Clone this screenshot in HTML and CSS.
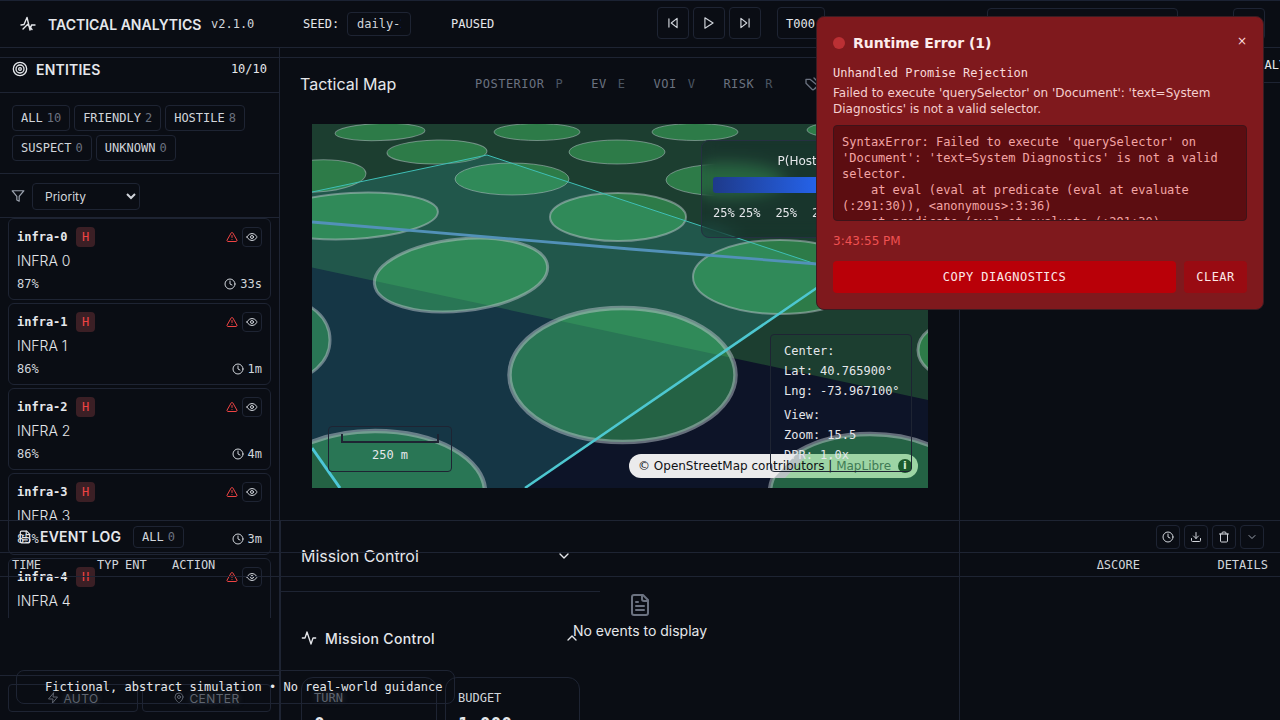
FILE: index.html
```html
<!DOCTYPE html>
<html lang="en">
<head>
<meta charset="utf-8">
<title>Tactical Analytics</title>
<link rel="stylesheet" href="styles.css">
</head>
<body>
<svg class="defs" aria-hidden="true">
  <symbol id="i-activity" viewBox="0 0 24 24"><path d="M22 12h-4l-3 9L9 3l-3 9H2"/></symbol>
  <symbol id="i-target" viewBox="0 0 24 24"><circle cx="12" cy="12" r="10"/><circle cx="12" cy="12" r="6"/><circle cx="12" cy="12" r="2"/></symbol>
  <symbol id="i-filter" viewBox="0 0 24 24"><polygon points="22 3 2 3 10 12.46 10 19 14 21 14 12.46 22 3"/></symbol>
  <symbol id="i-alert" viewBox="0 0 24 24"><path d="m21.73 18-8-14a2 2 0 0 0-3.48 0l-8 14A2 2 0 0 0 4 21h16a2 2 0 0 0 1.73-3"/><path d="M12 9v4"/><path d="M12 17h.01"/></symbol>
  <symbol id="i-eye" viewBox="0 0 24 24"><path d="M2 12s3-7 10-7 10 7 10 7-3 7-10 7-10-7-10-7Z"/><circle cx="12" cy="12" r="3"/></symbol>
  <symbol id="i-clock" viewBox="0 0 24 24"><circle cx="12" cy="12" r="10"/><polyline points="12 6 12 12 16 14"/></symbol>
  <symbol id="i-back" viewBox="0 0 24 24"><polygon points="19 20 9 12 19 4 19 20"/><line x1="5" y1="19" x2="5" y2="5"/></symbol>
  <symbol id="i-play" viewBox="0 0 24 24"><polygon points="5 3 19 12 5 21 5 3"/></symbol>
  <symbol id="i-forward" viewBox="0 0 24 24"><polygon points="5 4 15 12 5 20 5 4"/><line x1="19" y1="5" x2="19" y2="19"/></symbol>
  <symbol id="i-down" viewBox="0 0 24 24"><path d="m6 9 6 6 6-6"/></symbol>
  <symbol id="i-up" viewBox="0 0 24 24"><path d="m18 15-6-6-6 6"/></symbol>
  <symbol id="i-file" viewBox="0 0 24 24"><path d="M15 2H6a2 2 0 0 0-2 2v16a2 2 0 0 0 2 2h12a2 2 0 0 0 2-2V7Z"/><path d="M14 2v4a2 2 0 0 0 2 2h4"/><path d="M10 9H8"/><path d="M16 13H8"/><path d="M16 17H8"/></symbol>
  <symbol id="i-download" viewBox="0 0 24 24"><path d="M21 15v4a2 2 0 0 1-2 2H5a2 2 0 0 1-2-2v-4"/><polyline points="7 10 12 15 17 10"/><line x1="12" y1="15" x2="12" y2="3"/></symbol>
  <symbol id="i-trash" viewBox="0 0 24 24"><path d="M3 6h18"/><path d="M19 6v14a2 2 0 0 1-2 2H7a2 2 0 0 1-2-2V6"/><path d="M8 6V4a2 2 0 0 1 2-2h4a2 2 0 0 1 2 2v2"/></symbol>
  <symbol id="i-zap" viewBox="0 0 24 24"><polygon points="13 2 3 14 12 14 11 22 21 10 12 10 13 2"/></symbol>
  <symbol id="i-pin" viewBox="0 0 24 24"><path d="M20 10c0 6-8 12-8 12s-8-6-8-12a8 8 0 0 1 16 0Z"/><circle cx="12" cy="10" r="3"/></symbol>
  <symbol id="i-tag" viewBox="0 0 24 24"><path d="M9 5H3v6l9 9a2 2 0 0 0 3 0l4-4a2 2 0 0 0 0-3Z"/><path d="M15 3l7 7a3 3 0 0 1 0 4l-4 5"/></symbol>
</svg>

<header class="topbar">
  <svg class="logo" viewBox="0 0 16 16"><path d="M1 9l3-.5L7 1.500l3 12.500 1.500-5H15M3 13l4.500-4.500 4.500 5"/></svg>
  <span class="brand">TACTICAL ANALYTICS</span>
  <span class="version">v2.1.0</span>
  <span class="seed-label">SEED:</span>
  <span class="seed-input"><span class="seed-clip">daily-2026</span></span>
  <span class="status">PAUSED</span>
  <button class="tool tool-first"><svg class="ico i14"><use href="#i-back"/></svg></button>
  <button class="tool"><svg class="ico i14"><use href="#i-play"/></svg></button>
  <button class="tool"><svg class="ico i14"><use href="#i-forward"/></svg></button>
  <span class="turn">T000</span>
  <span class="search-box"></span>
  <button class="tool tool-last"></button>
</header>

<div class="workspace">
  <aside class="left">
    <div class="strip"></div>
    <div class="entities-head">
      <svg class="ico i16"><use href="#i-target"/></svg>
      <span class="panel-title">ENTITIES</span>
      <span class="count">10/10</span>
    </div>
    <div class="chips">
      <span class="chip">ALL <i>10</i></span>
      <span class="chip">FRIENDLY <i>2</i></span>
      <span class="chip">HOSTILE <i>8</i></span>
      <span class="chip">SUSPECT <i>0</i></span>
      <span class="chip">UNKNOWN <i>0</i></span>
    </div>
    <div class="sort-row">
      <svg class="ico i14 dim"><use href="#i-filter"/></svg>
      <select class="sort"><option>Priority</option></select>
    </div>
    <div class="list">
      <article class="card">
        <div class="row"><b class="id">infra-0</b><span class="badge">H</span><svg class="ico i12 red push"><use href="#i-alert"/></svg><span class="eye"><svg class="ico i12"><use href="#i-eye"/></svg></span></div>
        <div class="name">INFRA 0</div>
        <div class="row stat"><span>87%</span><svg class="ico i12 push"><use href="#i-clock"/></svg><span>33s</span></div>
      </article>
      <article class="card">
        <div class="row"><b class="id">infra-1</b><span class="badge">H</span><svg class="ico i12 red push"><use href="#i-alert"/></svg><span class="eye"><svg class="ico i12"><use href="#i-eye"/></svg></span></div>
        <div class="name">INFRA 1</div>
        <div class="row stat"><span>86%</span><svg class="ico i12 push"><use href="#i-clock"/></svg><span>1m</span></div>
      </article>
      <article class="card">
        <div class="row"><b class="id">infra-2</b><span class="badge">H</span><svg class="ico i12 red push"><use href="#i-alert"/></svg><span class="eye"><svg class="ico i12"><use href="#i-eye"/></svg></span></div>
        <div class="name">INFRA 2</div>
        <div class="row stat"><span>86%</span><svg class="ico i12 push"><use href="#i-clock"/></svg><span>4m</span></div>
      </article>
      <article class="card">
        <div class="row"><b class="id">infra-3</b><span class="badge">H</span><svg class="ico i12 red push"><use href="#i-alert"/></svg><span class="eye"><svg class="ico i12"><use href="#i-eye"/></svg></span></div>
        <div class="name">INFRA 3</div>
        <div class="row stat"><span>85%</span><svg class="ico i12 push"><use href="#i-clock"/></svg><span>3m</span></div>
      </article>
      <article class="card">
        <div class="row"><b class="id">infra-4</b><span class="badge">H</span><svg class="ico i12 red push"><use href="#i-alert"/></svg><span class="eye"><svg class="ico i12"><use href="#i-eye"/></svg></span></div>
        <div class="name">INFRA 4</div>
        <div class="row stat"><span>85%</span><svg class="ico i12 push"><use href="#i-clock"/></svg><span>5m</span></div>
      </article>
    </div>
    <div class="left-foot">
      <span class="foot-btn"><svg class="ico i12"><use href="#i-zap"/></svg>AUTO</span>
      <span class="foot-btn"><svg class="ico i12"><use href="#i-pin"/></svg>CENTER</span>
    </div>
  </aside>

  <main class="center">
    <div class="strip"></div>
    <section class="map-panel">
      <div class="map-head">
        <h2 class="map-title">Tactical Map</h2>
        <div class="layers">
          <span class="layer">POSTERIOR<i>P</i></span>
          <span class="layer">EV<i>E</i></span>
          <span class="layer">VOI<i>V</i></span>
          <span class="layer">RISK<i>R</i></span>
          <svg class="ico i16 layer-ico"><use href="#i-tag"/></svg>
        </div>
      </div>
      <div class="map">
        <svg class="terrain" viewBox="312 124 616 364" preserveAspectRatio="none">
          <rect x="312" y="124" width="616" height="364" fill="#1c3e30"/>
          <polygon points="312,267.500 928,400 928,488 312,488" fill="#0d1428"/>
          <polygon points="487,155 840,272 525,488 340,488 312,448 312,192" fill="#38bdb8" fill-opacity=".2"/>
          <g class="fields thin">
            <ellipse cx="380" cy="132" rx="45" ry="8.500" transform="rotate(-2 380 132)"/>
            <ellipse cx="537" cy="132" rx="43" ry="8.500"/>
            <ellipse cx="695" cy="132" rx="43" ry="8.500"/>
            <ellipse cx="437" cy="152" rx="50" ry="12" transform="rotate(-1 437 152)"/>
            <ellipse cx="617" cy="152" rx="48" ry="12"/>
            <ellipse cx="316" cy="176" rx="50" ry="16" transform="rotate(-3 316 176)"/>
            <ellipse cx="512" cy="179" rx="57" ry="16"/>
            <ellipse cx="725" cy="180" rx="59" ry="16"/>
            <ellipse cx="845" cy="130" rx="38" ry="8"/>
          </g>
          <g class="fields mid">
            <ellipse cx="352" cy="216" rx="86" ry="23" transform="rotate(-3 352 216)"/>
            <ellipse cx="618" cy="217" rx="68" ry="24"/>
            <ellipse cx="780" cy="277" rx="87" ry="37"/>
          </g>
          <g class="fields big">
            <ellipse cx="461" cy="275" rx="87" ry="36" transform="rotate(-6 461 275)"/>
            <ellipse cx="285" cy="340" rx="45" ry="40"/>
            <ellipse cx="965" cy="350" rx="47" ry="31"/>
          </g>
          <g class="fields huge">
            <ellipse cx="622.500" cy="375" rx="113" ry="67"/>
            <ellipse cx="375" cy="492" rx="110" ry="61"/>
            <ellipse cx="870" cy="492" rx="100" ry="58"/>
          </g>
          <path d="M312 192L487 155L840 272" fill="none" stroke="#3fbfb6" stroke-width="1"/>
          <path d="M840 272L525 488" fill="none" stroke="#4dc7d0" stroke-width="2.500"/>
          <path d="M312 448L340 488" fill="none" stroke="#4dc7d8" stroke-width="3"/>
          <path d="M312 222L630 249L830 265" fill="none" stroke="#5291b8" stroke-width="2.800"/>
        </svg>

        <div class="legend">
          <div class="legend-title">P(Hostile)</div>
          <div class="legend-bar"></div>
          <div class="legend-stops"><span>25%</span><span>25%</span><span class="wide">25%</span><span class="wide">25%</span></div>
        </div>

        <div class="scale-box">
          <div class="scale-bar"></div>
          <div class="scale-text">250 m</div>
        </div>

        <div class="attrib">© OpenStreetMap contributors | <span class="attrib-link">MapLibre</span><span class="info">i</span></div>

        <div class="center-box">
          <div>Center:</div>
          <div>Lat: 40.765900°</div>
          <div>Lng: -73.967100°</div>
          <div class="view">View:</div>
          <div>Zoom: 15.5</div>
          <div>DPR: 1.0x</div>
        </div>
      </div>
    </section>

    <section class="mission-top">
      <h2 class="mission-title">Mission Control</h2>
      <svg class="ico i16"><use href="#i-down"/></svg>
    </section>
    <section class="mission-body">
      <div class="mission-head">
        <svg class="ico i16"><use href="#i-activity"/></svg>
        <h3 class="mission-sub">Mission Control</h3>
        <svg class="ico i16 push"><use href="#i-up"/></svg>
      </div>
      <div class="metrics">
        <div class="metric"><div class="metric-label under-toast">TURN</div><div class="metric-value">0</div></div>
        <div class="metric"><div class="metric-label">BUDGET</div><div class="metric-value">1,000</div></div>
      </div>
    </section>
  </main>

  <aside class="right">
    <div class="tabs"><span class="tab">ANALYSIS</span></div>
  </aside>
</div>

<section class="event-log">
  <div class="log-head">
    <svg class="ico i14"><use href="#i-file"/></svg>
    <span class="panel-title">EVENT LOG</span>
    <span class="chip log-chip">ALL <i>0</i></span>
    <span class="log-tools">
      <button class="mini"><svg class="ico i12"><use href="#i-clock"/></svg></button>
      <button class="mini"><svg class="ico i12"><use href="#i-download"/></svg></button>
      <button class="mini"><svg class="ico i12"><use href="#i-trash"/></svg></button>
      <button class="mini"><svg class="ico i12 dim"><use href="#i-down"/></svg></button>
    </span>
  </div>
  <div class="log-cols">
    <span class="c-time">TIME</span><span class="c-type">TYP</span><span class="c-ent">ENT</span><span class="c-action">ACTION</span><span class="c-score">ΔSCORE</span><span class="c-details">DETAILS</span>
  </div>
  <div class="log-empty">
    <svg class="ico i24 dim"><use href="#i-file"/></svg>
    <p class="log-empty-text">No events to display</p>
  </div>
</section>

<div class="toast">Fictional, abstract simulation • No real-world guidance</div>

<section class="error">
  <div class="err-head">
    <span class="err-dot"></span>
    <h2 class="err-title">Runtime Error (1)</h2>
    <span class="err-close">×</span>
  </div>
  <div class="err-type">Unhandled Promise Rejection</div>
  <p class="err-msg">Failed to execute 'querySelector' on 'Document': 'text=System Diagnostics' is not a valid selector.</p>
  <pre class="err-stack">SyntaxError: Failed to execute 'querySelector' on 'Document': 'text=System Diagnostics' is not a valid selector.
    at eval (eval at predicate (eval at evaluate (:291:30)), &lt;anonymous&gt;:3:36)
    at predicate (eval at evaluate (:291:30)</pre>
  <div class="err-time">3:43:55 PM</div>
  <div class="err-actions">
    <button class="err-copy">COPY DIAGNOSTICS</button>
    <button class="err-clear">CLEAR</button>
  </div>
</section>
</body>
</html>
```
FILE: styles.css
```css
* { box-sizing: border-box; }
html, body { margin: 0; height: 720px; overflow: hidden; }
body { background: #0a0d14; color: #e5e7eb; font-family: Inter, "Liberation Sans", sans-serif; font-size: 14px; position: relative; }
h2, h3, p { margin: 0; font-weight: 400; }
i { font-style: normal; }
button { font: inherit; color: inherit; background: none; padding: 0; }
.defs { position: absolute; width: 0; height: 0; }

.ico { fill: none; stroke: currentColor; stroke-width: 2; stroke-linecap: round; stroke-linejoin: round; flex: none; display: block; }
.i12 { width: 12px; height: 12px; }
.i14 { width: 14px; height: 14px; }
.i16 { width: 16px; height: 16px; }
.i24 { width: 24px; height: 24px; }
.red { color: #ef4444; }
.dim { color: #9ca3af; }
.push { margin-left: auto; }

/* top bar */
.topbar { height: 48px; display: flex; align-items: center; border-top: 1px solid #1b2233; border-bottom: 1px solid #1e2433; font-family: "DejaVu Sans Mono", monospace; font-size: 12px; white-space: nowrap; }
.logo { width: 16px; height: 16px; margin-left: 20px; fill: none; stroke: #e5e7eb; stroke-width: 1.400; stroke-linejoin: round; stroke-linecap: round; flex: none; }
.brand { font-family: Inter, sans-serif; font-weight: 600; font-size: 14px; margin-left: 12px; width: 154px; }
.version { margin-left: 9px; width: 43px; color: #d1d5db; }
.seed-label { margin-left: 49px; width: 36px; }
.seed-input { margin-left: 8px; width: 64px; height: 24px; border: 1px solid #1e2433; border-radius: 4px; padding: 0 9px; display: flex; align-items: center; color: #d1d5db; }
.seed-clip { display: block; overflow: hidden; width: 47px; }
.status { margin-left: 40px; width: 206px; }
.tool { width: 32px; height: 32px; border: 1px solid #1e2433; border-radius: 4px; margin: 0 4px 2px 0; display: flex; align-items: center; justify-content: center; color: #d1d5db; }
.turn { margin: 0 0 2px 12px; width: 48px; height: 32px; border: 1px solid #1e2433; border-radius: 4px; display: flex; align-items: center; padding: 2px 0 0 8px; }
.search-box { margin-left: 162px; width: 191px; height: 32px; border: 1px solid #1e2433; border-radius: 4px; }
.tool-last { margin: 0 0 0 55px; }

/* layout */
.workspace { height: 672px; display: grid; grid-template-columns: 280px 680px 320px; }
.strip { height: 10px; border-bottom: 1px solid #1e2433; flex: none; }

/* left */
.left { border-right: 1px solid #1e2433; display: flex; flex-direction: column; }
.entities-head { height: 35px; border-bottom: 1px solid #1e2433; display: flex; align-items: center; padding: 0 12px 12px 12px; flex: none; }
.panel-title { font-weight: 600; font-size: 14px; margin-left: 8px; letter-spacing: .2px; }
.count { margin-left: auto; font-family: "DejaVu Sans Mono", monospace; font-size: 12px; color: #e5e7eb; }
.chips { display: flex; flex-wrap: wrap; gap: 4px; padding: 12px 12px; height: 81px; align-content: flex-start; border-bottom: 1px solid #1e2433; flex: none; }
.chip { height: 26px; border: 1px solid #1e2433; border-radius: 4px; padding: 0 8px; display: inline-flex; align-items: center; gap: 4px; font-family: "DejaVu Sans Mono", monospace; font-size: 12px; color: #d1d5db; }
.chip i { color: #6b7280; }
.sort-row { height: 44px; border-bottom: 1px solid #1e2433; display: flex; align-items: center; padding: 1px 0 0 11px; gap: 7px; flex: none; }
.sort { width: 108px; height: 27px; background: #0a0d14; color: #d1d5db; border: 1px solid #1e2433; border-radius: 4px; font-family: Inter, sans-serif; font-size: 12px; padding-left: 8px; color-scheme: dark; }
.list { height: 400px; overflow: hidden; padding: 0 8px; display: flex; flex-direction: column; gap: 3px; flex: none; }
.card { height: 82px; flex: none; border: 1px solid #1e2433; border-radius: 6px; padding: 8px 8px 0; }
.row { display: flex; align-items: center; }
.id { font-family: "DejaVu Sans Mono", monospace; font-size: 12px; font-weight: 700; width: 59px; }
.badge { width: 19px; height: 20px; background: #3b1f25; color: #ef4444; border-radius: 4px; font-family: "DejaVu Sans Mono", monospace; font-size: 12px; display: flex; align-items: center; justify-content: center; }
.eye { width: 20px; height: 20px; margin-left: 4px; border: 1px solid #1e2433; border-radius: 4px; display: flex; align-items: center; justify-content: center; color: #d1d5db; }
.name { font-size: 14px; line-height: 20px; margin-top: 4px; font-weight: 300; }
.stat { font-family: "DejaVu Sans Mono", monospace; font-size: 12px; color: #d1d5db; margin-top: 4px; gap: 4px; height: 18px; }
.left-foot { margin-top: 57px; border-top: 1px solid #1e2433; padding: 8px 8px 0; display: grid; grid-template-columns: 130px 129px; gap: 4px; flex: none; }
.foot-btn { height: 28px; border: 1px solid #1e2433; border-radius: 4px; display: flex; align-items: center; justify-content: center; gap: 4px; color: #5f6570; font-size: 12px; letter-spacing: .4px; text-shadow: 0 0 6px rgba(150, 160, 170, .35); }

/* centre */
.center { display: flex; flex-direction: column; }
.map-panel { height: 462px; padding: 0 32px; flex: none; }
.map-head { height: 66px; margin: 0 -12px; padding: 0 0 14px; display: flex; align-items: center; }
.map-title { font-size: 16px; width: 175px; }
.layers { display: flex; align-items: center; gap: 28px; font-family: "DejaVu Sans Mono", monospace; font-size: 12px; letter-spacing: .5px; color: #6b7280; }
.layer i { margin-left: 11px; color: #4b5563; }
.layer-ico { margin-left: 3px; color: #6b7280; }
.map { position: relative; width: 616px; height: 364px; overflow: hidden; }
.terrain { display: block; width: 616px; height: 364px; }
.fields { fill: rgb(73, 215, 110); fill-opacity: .4; stroke: #bcc6cc; stroke-opacity: .5; }
.thin { stroke-width: 1; }
.mid { stroke-width: 2; }
.big { stroke-width: 3; }
.huge { stroke-width: 4.500; }
.legend { position: absolute; left: 389px; top: 16px; width: 216px; height: 98px; border: 1px solid #263042; border-radius: 8px; padding: 12px 11px; background: rgba(12, 20, 28, .2); backdrop-filter: blur(8px); }
.legend-title { text-align: center; padding-right: 5px; font-family: "DejaVu Sans", sans-serif; font-weight: 400; font-size: 12px; line-height: 16px; color: #e5e7eb; }
.legend-bar { height: 16px; margin-top: 8px; border-radius: 3px; background: linear-gradient(90deg, #1e3a8a, #2563eb 55%, #60a5fa); }
.legend-stops { display: flex; gap: 4px; margin-top: 12px; font-family: "DejaVu Sans Mono", monospace; font-size: 12px; line-height: 16px; color: #e5e7eb; }
.legend-stops .wide { margin-left: 11px; }
.scale-box { position: absolute; left: 16px; top: 302px; width: 124px; height: 46px; border: 1px solid #1e2433; border-radius: 4px; padding: 7px 12px 0; }
.scale-bar { height: 9px; width: 98px; border: 2px solid #1e2433; border-top: none; }
.scale-text { text-align: center; font-family: "DejaVu Sans Mono", monospace; font-size: 12px; line-height: 16px; margin-top: 4px; color: #e5e7eb; }
.attrib { position: absolute; left: 317px; top: 330px; width: 289px; height: 24px; border-radius: 12px; padding-left: 9px; display: flex; align-items: center; font-family: "DejaVu Sans", sans-serif; font-size: 12px; white-space: pre; color: #0f1115; background: linear-gradient(133deg, #ebebec 122px, #b9c2c4 123px, #b9c2c4 130px, #9dd4a4 131px); }
.attrib-link { color: #3f7a55; }
.info { position: absolute; right: 6px; top: 5px; width: 14px; height: 14px; border-radius: 50%; background: #1c5a2b; color: #cfeccf; font-size: 11px; font-weight: 700; line-height: 14px; text-align: center; }
.center-box { position: absolute; left: 458px; top: 210px; width: 142px; height: 138px; border: 1px solid #1e2433; border-radius: 4px; padding: 6px 0 6px 13px; overflow: hidden; white-space: nowrap; font-family: "DejaVu Sans Mono", monospace; font-size: 12px; line-height: 20px; color: #e5e7eb; }
.view { margin-top: 4px; }

.mission-top { width: 320px; height: 72px; border-left: 1px solid #1e2433; border-bottom: 1px solid #1e2433; flex: none; display: flex; align-items: center; padding: 0 28px 0 20px; justify-content: space-between; }
.mission-title { font-size: 16px; color: #e5e7eb; }
.mission-body { width: 320px; flex: 1; border-left: 1px solid #1e2433; padding: 37px 20px 0; }
.mission-head { display: flex; align-items: center; height: 18px; }
.mission-sub { font-size: 14px; font-weight: 500; margin-left: 8px; letter-spacing: .35px; }
.metrics { display: grid; grid-template-columns: 136px 135px; gap: 8px; margin-top: 30px; }
.metric { height: 100px; border: 1px solid #1e2433; border-radius: 12px; padding: 12px; }
.metric-label { font-family: "DejaVu Sans Mono", monospace; font-size: 12px; line-height: 16px; color: #d1d5db; }
.under-toast { color: #5f6570; text-shadow: 0 0 6px rgba(150, 160, 170, .35); }
.metric-value { font-family: "DejaVu Sans Mono", monospace; font-size: 18px; font-weight: 700; line-height: 24px; margin-top: 6px; }

/* right */
.right { border-left: 1px solid #1e2433; margin-left: -1px; }
.tabs { height: 35px; border-bottom: 1px solid #1e2433; padding-left: 290px; overflow: hidden; display: flex; align-items: center; font-family: "DejaVu Sans Mono", monospace; font-size: 12px; }

/* event log */
.event-log { position: absolute; left: 0; right: 0; top: 520px; bottom: 0; border-top: 1px solid #1e2433; }
.log-head { height: 32px; padding: 0 16px 0 18px; display: flex; align-items: center; border-bottom: 1px solid #1e2433; }
.log-head .panel-title { margin-left: 8px; }
.log-chip { height: 22px; margin-left: 12px; }
.log-tools { margin-left: auto; display: flex; gap: 4px; }
.mini { width: 24px; height: 24px; border: 1px solid #1e2433; border-radius: 4px; display: flex; align-items: center; justify-content: center; color: #d1d5db; }
.log-cols { height: 24px; display: flex; align-items: center; border-bottom: 1px solid #1e2433; padding: 0 12px; font-family: "DejaVu Sans Mono", monospace; font-size: 12px; color: #d1d5db; white-space: pre; }
.c-time { width: 85px; }
.c-type { width: 28px; }
.c-ent { width: 47px; }
.c-action { width: 600px; }
.c-score { width: 368px; text-align: right; }
.c-details { margin-left: auto; }
.log-empty { display: flex; flex-direction: column; align-items: center; padding-top: 16px; gap: 5px; }
.log-empty .ico { color: #6b7280; }
.log-empty-text { font-size: 14px; line-height: 18px; }

/* toast */
.toast { position: absolute; left: 16px; top: 670px; width: 439px; height: 34px; border: 1px solid #1e2433; border-radius: 8px; padding-left: 28px; display: flex; align-items: center; font-family: "DejaVu Sans Mono", monospace; font-size: 12px; white-space: nowrap; }

/* error */
.error { position: absolute; left: 816px; top: 16px; width: 448px; height: 294px; background: #7f191d; border: 1px solid #3a1c22; border-radius: 8px; padding: 16px; color: #f9dada; }
.err-head { display: flex; align-items: center; height: 20px; }
.err-dot { width: 12px; height: 12px; border-radius: 50%; background: #bb3034; flex: none; }
.err-title { font-family: "DejaVu Sans", sans-serif; font-weight: 700; font-size: 14px; margin-left: 8px; color: #fdecec; }
.err-close { margin: -4px 0 0 auto; font-family: "DejaVu Sans", sans-serif; font-size: 12px; line-height: 14px; }
.err-type { font-family: "DejaVu Sans Mono", monospace; font-size: 12px; line-height: 16px; margin-top: 12px; }
.err-msg { font-family: "DejaVu Sans", sans-serif; font-size: 12px; line-height: 16px; margin-top: 4px; color: #f5cfcf; }
.err-stack { margin: 8px 0 0; height: 96px; overflow: hidden; background: #5c0d11; border: 1px solid #3e1319; border-radius: 4px; padding: 8px; font-family: "DejaVu Sans Mono", monospace; font-size: 12px; line-height: 16px; color: #f3a5a5; white-space: pre-wrap; }
.err-time { font-family: "DejaVu Sans", sans-serif; font-size: 12px; line-height: 16px; margin-top: 12px; color: #f05252; }
.err-actions { display: flex; gap: 8px; margin-top: 12px; }
.err-copy, .err-clear { height: 32px; border: none; border-radius: 4px; font-family: "DejaVu Sans Mono", monospace; font-size: 12px; letter-spacing: .5px; color: #fde8e8; }
.err-copy { flex: 1; background: #b90008; }
.err-clear { width: 63px; background: #990b12; }
```
